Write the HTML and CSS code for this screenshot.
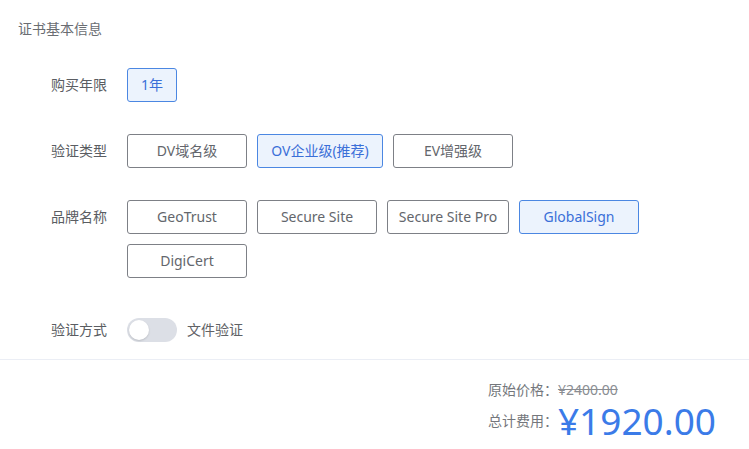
FILE: index.html
```html
<!DOCTYPE html>
<html lang="zh-CN">
<head>
<meta charset="utf-8">
<link rel="stylesheet" href="styles.css">
</head>
<body>
<div class="panel">
  <div class="title">证书基本信息</div>
  <div class="form">
    <div class="row">
      <div class="label">购买年限</div>
      <div class="opts">
        <div class="opt short active">1年</div>
      </div>
    </div>
    <div class="row">
      <div class="label">验证类型</div>
      <div class="opts">
        <div class="opt">DV域名级</div>
        <div class="opt wide active">OV企业级(推荐)</div>
        <div class="opt">EV增强级</div>
      </div>
    </div>
    <div class="row">
      <div class="label">品牌名称</div>
      <div class="opts brands">
        <div class="opt">GeoTrust</div>
        <div class="opt">Secure Site</div>
        <div class="opt pro">Secure Site Pro</div>
        <div class="opt active">GlobalSign</div>
        <div class="opt">DigiCert</div>
      </div>
    </div>
    <div class="row switch-row">
      <div class="label">验证方式</div>
      <div class="switch-wrap">
        <span class="switch"><span class="knob"></span></span>
        <span class="switch-text">文件验证</span>
      </div>
    </div>
  </div>
</div>
<div class="footer">
  <div class="prices">
    <div class="plabel">原始价格：</div>
    <div class="orig">¥2400.00</div>
    <div class="plabel">总计费用：</div>
    <div class="total">¥1920.00</div>
  </div>
</div>
</body>
</html>
```
FILE: styles.css
```css
* { box-sizing: border-box; }
body {
  margin: 0;
  background: #fff;
  font-family: "Noto Sans", "Noto Sans CJK SC", sans-serif;
  color: #606266;
}
.panel {
  padding: 19px 0 17px 18px;
  border-bottom: 1px solid #ebeef5;
}
.title {
  font-size: 14px;
  line-height: 20px;
  color: #6a6d72;
}
.form {
  margin-top: 29px;
  padding-left: 33px;
}
.row {
  display: flex;
  align-items: flex-start;
  margin-bottom: 32px;
}
.label {
  width: 76px;
  flex: none;
  font-size: 14px;
  line-height: 34px;
  color: #5a5d62;
}
.opts {
  display: flex;
  flex-wrap: wrap;
  gap: 10px;
  width: 540px;
}
.opt {
  width: 120px;
  height: 34px;
  border: 1px solid #7d8086;
  border-radius: 3px;
  font-size: 14px;
  line-height: 32px;
  text-align: center;
  color: #63666c;
  white-space: nowrap;
}
.opt.short { width: 50px; }
.opt.wide { width: 126px; }
.opt.pro { width: 122px; }
.opt.active {
  background: #ecf3fd;
  border-color: #4b87e2;
  color: #3a6fd8;
}
.switch-row {
  margin-top: 40px;
  margin-bottom: 0;
  align-items: center;
}
.switch-row .label { line-height: 24px; }
.switch-wrap {
  display: flex;
  align-items: center;
  gap: 10px;
}
.switch {
  position: relative;
  width: 50px;
  height: 24px;
  border-radius: 12px;
  background: #dcdfe6;
}
.knob {
  position: absolute;
  left: 2px;
  top: 2px;
  width: 20px;
  height: 20px;
  border-radius: 50%;
  background: #fff;
  box-shadow: 0 1px 2px rgba(0,0,0,0.15);
}
.switch-text {
  font-size: 14px;
  line-height: 24px;
  color: #606266;
}
.footer {
  display: flex;
  justify-content: flex-end;
  padding: 20px 33px 0 0;
}
.prices {
  display: grid;
  grid-template-columns: auto auto;
  align-items: center;
}
.plabel {
  font-size: 14px;
  line-height: 20px;
  color: #74777c;
}
.orig {
  font-size: 14px;
  line-height: 20px;
  color: #8a8d92;
  text-decoration: line-through;
}
.total {
  font-size: 37px;
  line-height: 42px;
  color: #3b7be8;
}
```
